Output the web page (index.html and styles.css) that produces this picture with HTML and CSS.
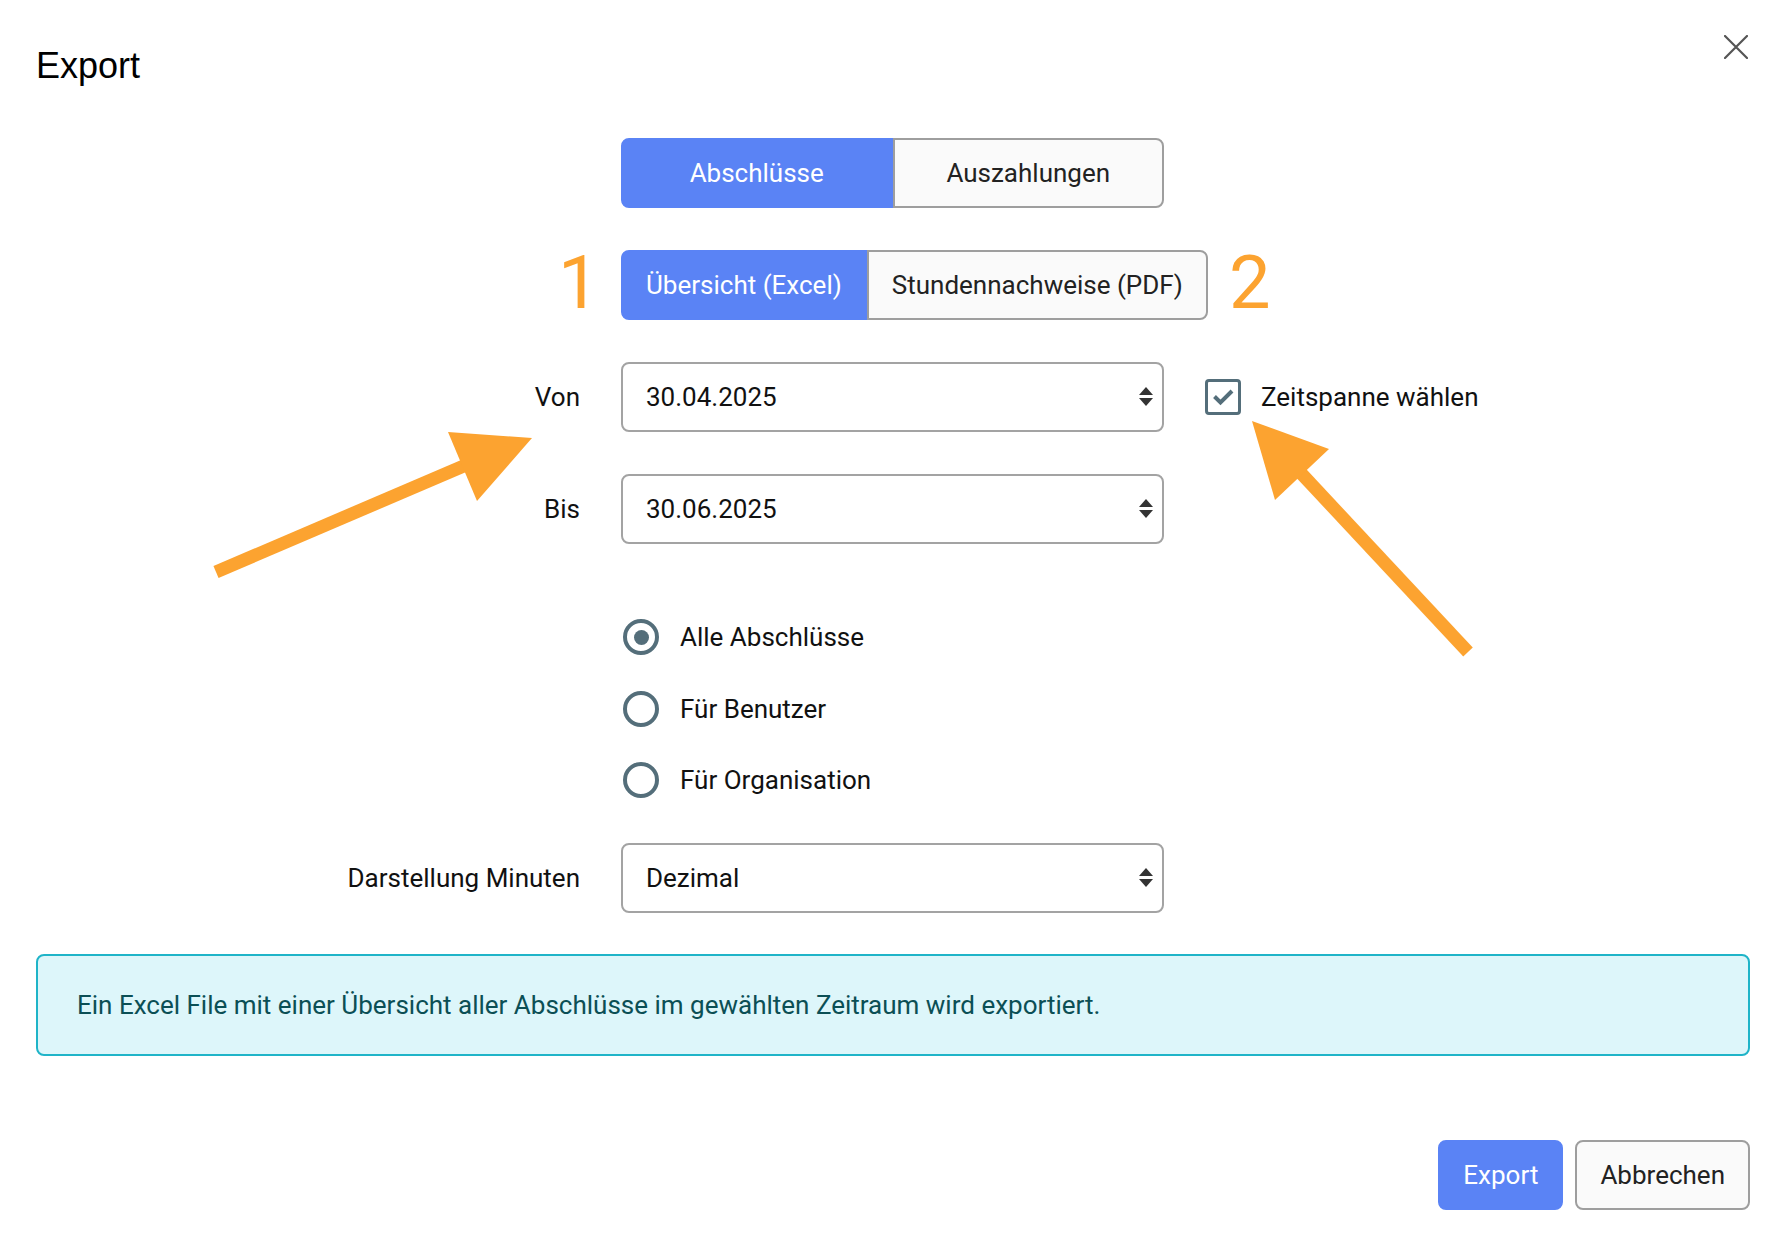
FILE: index.html
```html
<!DOCTYPE html>
<html lang="de">
<head>
    <meta charset="UTF-8">
    <meta name="viewport" content="width=device-width, initial-scale=1.0">
    <title>Export</title>
    <link rel="stylesheet" href="styles.css">
</head>
<body>

<div class="modal">
    <div class="modal-header">
        <h1 class="modal-title">Export</h1>
        <button class="close-btn" aria-label="Schliessen">
            <svg width="24" height="24" viewBox="0 0 24 24">
                <path d="M1 1 L23 23 M23 1 L1 23" stroke="#555" stroke-width="2.2" stroke-linecap="round"/>
            </svg>
        </button>
    </div>

    <div class="form">
        <div class="form-row">
            <div class="form-label"></div>
            <div class="form-control">
                <div class="seg-group">
                    <button class="seg active">Abschlüsse</button>
                    <button class="seg">Auszahlungen</button>
                </div>
            </div>
        </div>

        <div class="form-row">
            <div class="form-label"></div>
            <div class="form-control">
                <div class="seg-group seg-group-auto">
                    <button class="seg active">Übersicht (Excel)</button>
                    <button class="seg">Stundennachweise (PDF)</button>
                </div>
            </div>
        </div>

        <div class="form-row">
            <div class="form-label">Von</div>
            <div class="form-control">
                <div class="select">
                    <span>30.04.2025</span>
                    <svg class="select-arrows" width="14" height="20" viewBox="0 0 14 20">
                        <path d="M0 8 L7 0 L14 8 Z M0 11 L14 11 L7 19 Z" fill="#333"/>
                    </svg>
                </div>
            </div>
            <label class="check">
                <span class="check-box">
                    <svg width="30" height="30" viewBox="0 0 30 30">
                        <path d="M6.5 14.5 L12.5 20.5 L24 9" fill="none" stroke="#546e7a" stroke-width="4"/>
                    </svg>
                </span>
                Zeitspanne wählen
            </label>
        </div>

        <div class="form-row">
            <div class="form-label">Bis</div>
            <div class="form-control">
                <div class="select">
                    <span>30.06.2025</span>
                    <svg class="select-arrows" width="14" height="20" viewBox="0 0 14 20">
                        <path d="M0 8 L7 0 L14 8 Z M0 11 L14 11 L7 19 Z" fill="#333"/>
                    </svg>
                </div>
            </div>
        </div>

        <div class="form-row">
            <div class="form-label"></div>
            <div class="form-control">
                <div class="radio-list">
                    <label class="radio"><span class="radio-circle checked"></span>Alle Abschlüsse</label>
                    <label class="radio"><span class="radio-circle"></span>Für Benutzer</label>
                    <label class="radio"><span class="radio-circle"></span>Für Organisation</label>
                </div>
            </div>
        </div>

        <div class="form-row">
            <div class="form-label">Darstellung Minuten</div>
            <div class="form-control">
                <div class="select">
                    <span>Dezimal</span>
                    <svg class="select-arrows" width="14" height="20" viewBox="0 0 14 20">
                        <path d="M0 8 L7 0 L14 8 Z M0 11 L14 11 L7 19 Z" fill="#333"/>
                    </svg>
                </div>
            </div>
        </div>
    </div>

    <div class="alert">Ein Excel File mit einer Übersicht aller Abschlüsse im gewählten Zeitraum wird exportiert.</div>

    <div class="actions">
        <button class="btn btn-primary">Export</button>
        <button class="btn btn-cancel">Abbrechen</button>
    </div>

    <!-- annotations drawn over the dialog -->
    <div class="annotations">
        <svg width="1786" height="1248" viewBox="0 0 1786 1248">
            <line x1="216" y1="572" x2="466" y2="465" stroke="#fca330" stroke-width="13"/>
            <polygon points="532,438 448,432 477,501" fill="#fca330"/>
            <line x1="1468" y1="652" x2="1299" y2="471" stroke="#fca330" stroke-width="13"/>
            <polygon points="1252,421 1329,449 1275,500" fill="#fca330"/>
        </svg>
        <span class="num num-1">1</span>
        <span class="num num-2">2</span>
    </div>
</div>

</body>
</html>
```

FILE: styles.css
```css
* {
    box-sizing: border-box;
}
body {
    margin: 0;
    font-family: Roboto, "Noto Sans", sans-serif;
    font-size: 26px;
    color: #111;
    background-color: #fff;
}
.modal {
    position: relative;
    width: 1786px;
    height: 1248px;
    padding: 35px 36px 0 36px;
    overflow: hidden;
}
.modal-header {
    display: flex;
    justify-content: space-between;
    align-items: flex-start;
}
.modal-title {
    margin: 11px 0 0 0;
    font-family: "Liberation Sans", Arial, sans-serif;
    font-weight: normal;
    font-size: 36px;
    line-height: 40px;
    color: #000;
}
.close-btn {
    width: 24px;
    height: 24px;
    padding: 0;
    margin-right: 2px;
    border: none;
    background: none;
}
.form {
    display: flex;
    flex-direction: column;
    gap: 42px;
    margin-top: 52px;
}
.form-row {
    display: flex;
    align-items: center;
    gap: 41px;
}
.form-label {
    width: 544px;
    flex-shrink: 0;
    text-align: right;
}
.form-control {
    width: 543px;
    flex-shrink: 0;
}
.seg-group {
    display: flex;
    height: 70px;
}
.seg-group-auto {
    width: max-content;
}
.seg {
    flex: 1;
    height: 70px;
    padding: 0 23px;
    border: 2px solid #9e9e9e;
    background-color: #fafafa;
    color: #222;
    font: inherit;
}
.seg-group-auto .seg {
    flex: none;
}
.seg:first-child {
    border-radius: 8px 0 0 8px;
}
.seg:last-child {
    border-radius: 0 8px 8px 0;
}
.seg.active {
    background-color: #5a83f5;
    border-color: #5a83f5;
    color: #fff;
}
.select {
    display: flex;
    align-items: center;
    justify-content: space-between;
    height: 70px;
    padding: 0 9px 0 23px;
    border: 2px solid #a3a3a3;
    border-radius: 8px;
    background-color: #fff;
}
.check {
    display: flex;
    align-items: center;
    gap: 20px;
}
.check-box {
    display: flex;
    align-items: center;
    justify-content: center;
    width: 36px;
    height: 36px;
    border: 3.5px solid #546e7a;
    border-radius: 4px;
}
.radio-list {
    display: flex;
    flex-direction: column;
    gap: 35.5px;
    padding: 33px 0 3px 2px;
}
.radio {
    display: flex;
    align-items: center;
    gap: 21px;
    height: 36px;
}
.radio-circle {
    display: flex;
    align-items: center;
    justify-content: center;
    width: 36px;
    height: 36px;
    border: 4px solid #546e7a;
    border-radius: 50%;
}
.radio-circle.checked::after {
    content: '';
    width: 15px;
    height: 15px;
    border-radius: 50%;
    background-color: #546e7a;
}
.alert {
    display: flex;
    align-items: center;
    height: 102px;
    margin-top: 41px;
    padding: 0 39px;
    border: 2px solid #1fb4c8;
    border-radius: 8px;
    background-color: #ddf6fa;
    color: #0b4f55;
}
.actions {
    display: flex;
    justify-content: flex-end;
    gap: 12px;
    margin-top: 84px;
}
.btn {
    height: 70px;
    padding: 0 24px;
    border: 2px solid #9e9e9e;
    border-radius: 8px;
    background-color: #fafafa;
    color: #222;
    font: inherit;
}
.btn-primary {
    padding: 0 23px;
    background-color: #5a83f5;
    border-color: #5a83f5;
    color: #fff;
}
.btn-cancel {
    padding: 0 23px;
}
.annotations {
    position: absolute;
    top: 0;
    left: 0;
    width: 1786px;
    height: 1248px;
    pointer-events: none;
}
.annotations svg {
    position: absolute;
    top: 0;
    left: 0;
}
.num {
    position: absolute;
    font-family: Roboto, sans-serif;
    font-weight: normal;
    font-size: 74px;
    line-height: 74px;
    color: #fca330;
}
.num-1 {
    left: 558px;
    top: 246px;
}
.num-2 {
    left: 1229px;
    top: 246px;
}
```
